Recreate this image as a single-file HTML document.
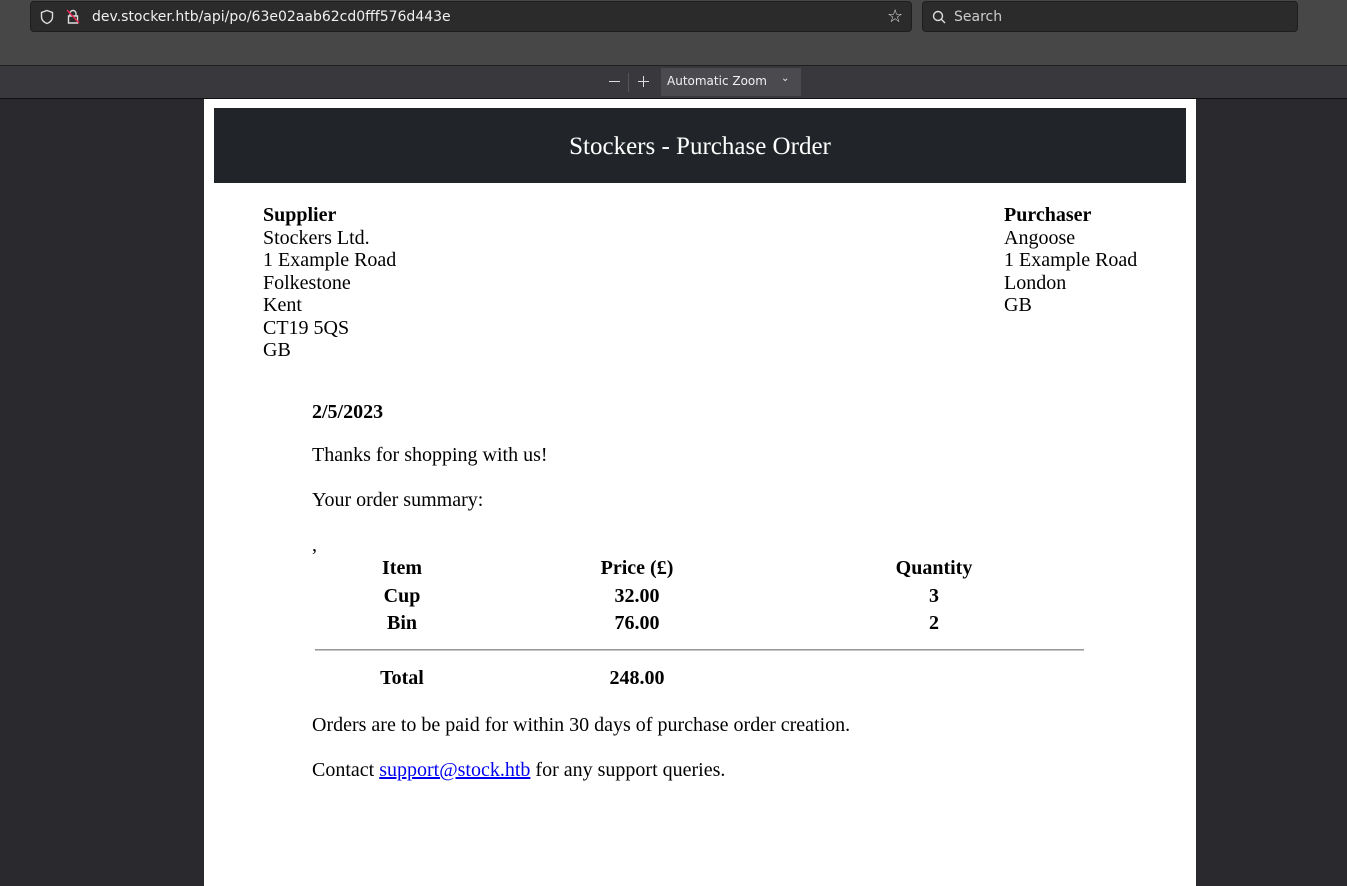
<!DOCTYPE html>
<html><head><meta charset="utf-8"><style>
*{margin:0;padding:0;box-sizing:border-box}
body{width:1347px;height:886px;overflow:hidden;background:#2a2a2e;position:relative;font-family:"Liberation Serif",serif;color:#000}
.top{position:absolute;left:0;top:0;width:1347px;height:66px;background:#474747;border-bottom:1px solid #1f1f1f}
.url{position:absolute;left:30px;top:1px;width:882px;height:31px;background:#2b2b2b;border:1px solid #1e1e1e;border-radius:4px;color:#f0f0f0;font:14px "DejaVu Sans","Liberation Sans",sans-serif}
.url span{position:absolute;left:61px;top:7px}
.search{position:absolute;left:922px;top:1px;width:376px;height:31px;background:#2b2b2b;border:1px solid #1e1e1e;border-radius:4px;color:#ccc;font:14px "DejaVu Sans","Liberation Sans",sans-serif}
.search span{position:absolute;left:31px;top:7px}
.tb{position:absolute;left:0;top:66px;width:1347px;height:33px;background:#38383d;border-bottom:1px solid #111}
.zoom{position:absolute;left:661px;top:68px;width:140px;height:28px;background:#4a4a4f;color:#f0f0f0;font:12px "DejaVu Sans","Liberation Sans",sans-serif;padding:6px 0 0 6px}
.page{position:absolute;left:204px;top:99px;width:992px;height:787px;background:#fff}
.hdr{position:absolute;left:10px;top:9px;width:972px;height:75px;background:#212529;color:#fff;font-size:25px;text-align:center;line-height:77px}
.addr{position:absolute;top:105px;font-size:20px;line-height:22.5px}
.t{position:absolute;font-size:20px}
b{font-weight:bold}
.c{position:absolute;font-size:20px;font-weight:bold;text-align:center;width:120px}
</style></head><body>
<div class="top">
 <div class="url">
  <svg style="position:absolute;left:8px;top:7px" width="16" height="16" viewBox="0 0 16 16"><path d="M8 1.5 L13.5 3.5 V8 C13.5 11 11 13.5 8 14.5 C5 13.5 2.5 11 2.5 8 V3.5 Z" fill="none" stroke="#ddd" stroke-width="1.4"/></svg>
  <svg style="position:absolute;left:34px;top:6px" width="16" height="18" viewBox="0 0 16 18"><path d="M5 8 V5.5 A3 3 0 0 1 11 5.5 V8 M3.5 8 H12.5 V15 H3.5 Z" fill="none" stroke="#ddd" stroke-width="1.4"/><path d="M2 2 L14 15" stroke="#e22850" stroke-width="1.5"/></svg>
  <span>dev.stocker.htb/api/po/63e02aab62cd0fff576d443e</span>
  <span style="left:856px;top:4px;font-size:18px;color:#ddd">☆</span>
 </div>
 <div class="search">
  <svg style="position:absolute;left:9px;top:8px" width="14" height="14" viewBox="0 0 14 14"><circle cx="6" cy="6" r="4.5" fill="none" stroke="#ddd" stroke-width="1.4"/><path d="M9.3 9.3 L13 13" stroke="#ddd" stroke-width="1.4"/></svg>
  <span>Search</span>
 </div>
</div>
<div class="tb">
 <div style="position:absolute;left:609px;top:15px;width:11px;height:1px;background:#ddd"></div>
 <div style="position:absolute;left:628px;top:7px;width:1px;height:19px;background:#555"></div>
 <div style="position:absolute;left:638px;top:15px;width:11px;height:1px;background:#ddd"></div>
 <div style="position:absolute;left:643px;top:10px;width:1px;height:11px;background:#ddd"></div>
</div>
<div class="zoom">Automatic Zoom<span style="position:absolute;left:120px;top:5px;font-size:10px">⌄</span></div>
<div class="page">
 <div class="hdr">Stockers - Purchase Order</div>
 <div class="addr" style="left:59px"><b>Supplier</b><br>Stockers Ltd.<br>1 Example Road<br>Folkestone<br>Kent<br>CT19 5QS<br>GB</div>
 <div class="addr" style="left:800px"><b>Purchaser</b><br>Angoose<br>1 Example Road<br>London<br>GB</div>
 <div class="t" style="left:108px;top:302px"><b>2/5/2023</b></div>
 <div class="t" style="left:108px;top:345px">Thanks for shopping with us!</div>
 <div class="t" style="left:108px;top:390px">Your order summary:</div>
 <div class="t" style="left:108px;top:435px">,</div>
 <div class="c" style="left:138px;top:458px">Item</div>
 <div class="c" style="left:373px;top:458px">Price (£)</div>
 <div class="c" style="left:670px;top:458px">Quantity</div>
 <div class="c" style="left:138px;top:486px">Cup</div>
 <div class="c" style="left:373px;top:486px">32.00</div>
 <div class="c" style="left:670px;top:486px">3</div>
 <div class="c" style="left:138px;top:513px">Bin</div>
 <div class="c" style="left:373px;top:513px">76.00</div>
 <div class="c" style="left:670px;top:513px">2</div>
 <div style="position:absolute;left:111px;top:550px;width:769px;height:2px;background:#c4c4c4;border-top:1px solid #999"></div>
 <div class="c" style="left:138px;top:568px">Total</div>
 <div class="c" style="left:373px;top:568px">248.00</div>
 <div class="t" style="left:108px;top:615px">Orders are to be paid for within 30 days of purchase order creation.</div>
 <div class="t" style="left:108px;top:660px">Contact <span style="color:#00e;text-decoration:underline">support@stock.htb</span> for any support queries.</div>
</div>
</body></html>
